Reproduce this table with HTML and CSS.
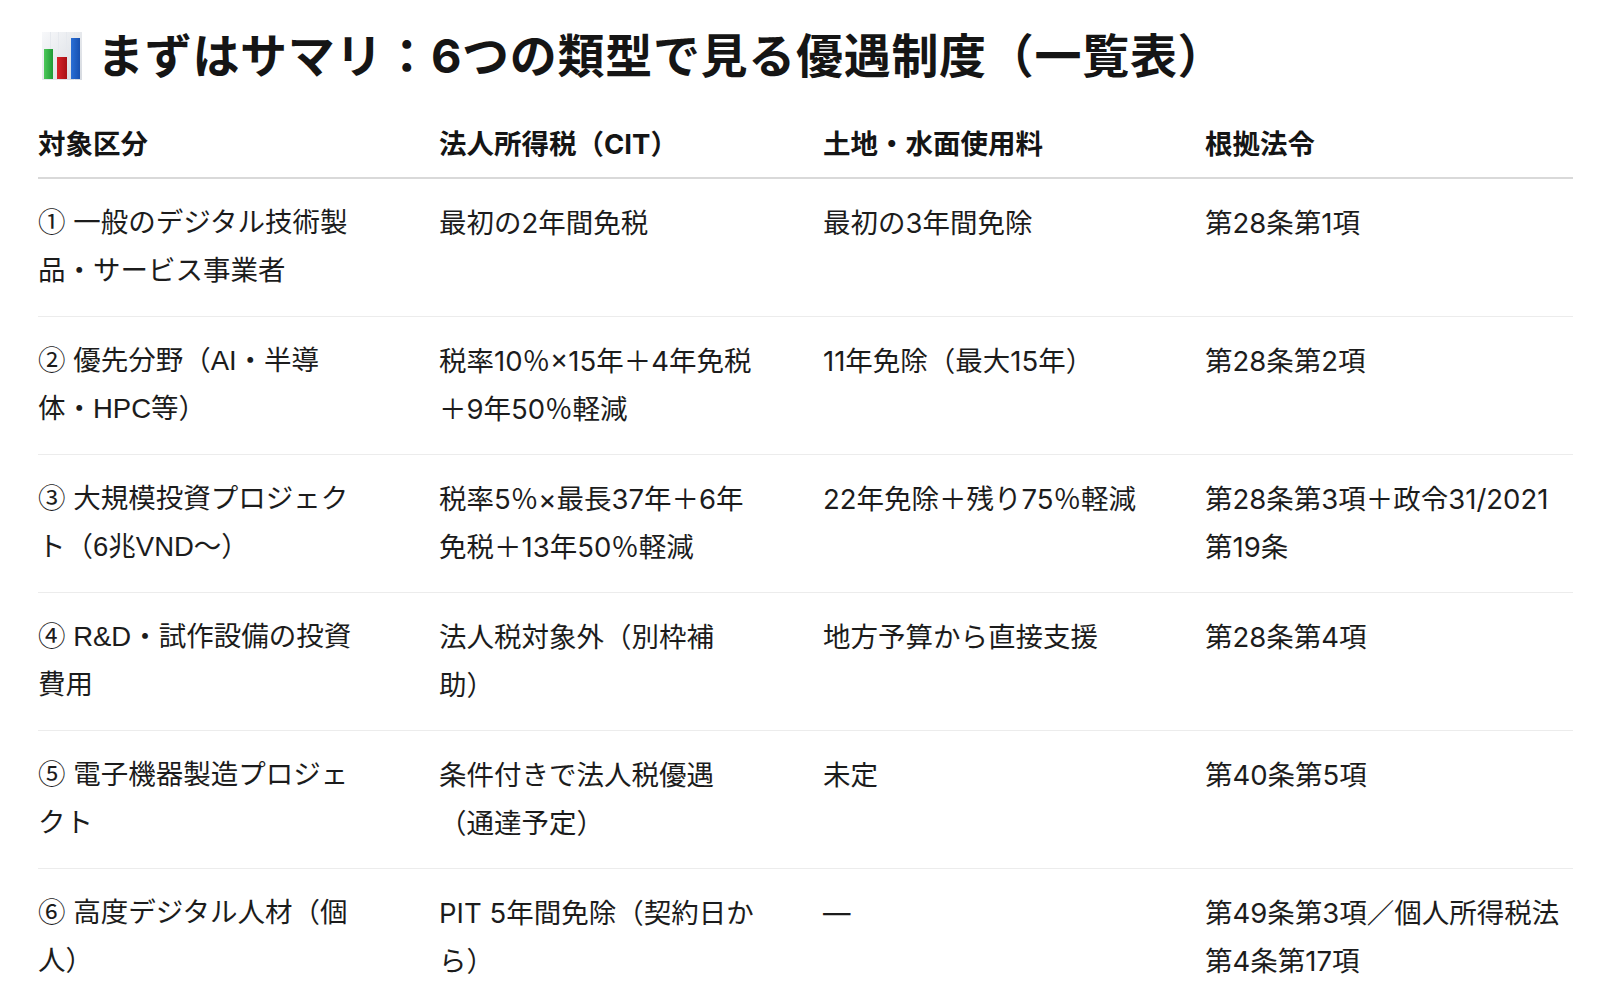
FILE: index.html
```html
<!DOCTYPE html>
<html lang="ja">
<head>
<meta charset="utf-8">
<title>まずはサマリ</title>
<link rel="stylesheet" href="styles.css">
</head>
<body>
<main class="page">
  <h2 class="title">
    <svg class="title-icon" width="40" height="48" viewBox="0 0 40 48" aria-hidden="true">
      <defs>
        <linearGradient id="card" x1="0" y1="0" x2="1" y2="1">
          <stop offset="0" stop-color="#f7f8fa"/>
          <stop offset="1" stop-color="#d6dae0"/>
        </linearGradient>
        <linearGradient id="g" x1="0" y1="0" x2="1" y2="0">
          <stop offset="0" stop-color="#4cc85a"/>
          <stop offset="1" stop-color="#1f9a35"/>
        </linearGradient>
        <linearGradient id="r" x1="0" y1="0" x2="1" y2="0">
          <stop offset="0" stop-color="#d9232a"/>
          <stop offset="1" stop-color="#a80f14"/>
        </linearGradient>
        <linearGradient id="b" x1="0" y1="0" x2="1" y2="0">
          <stop offset="0" stop-color="#2a6fd6"/>
          <stop offset="1" stop-color="#1750b0"/>
        </linearGradient>
      </defs>
      <rect x="0" y="0" width="40" height="48" fill="url(#card)"/>
      <g stroke="#e6e9ee" stroke-width="1">
        <line x1="8.5" y1="0" x2="8.5" y2="48"/>
        <line x1="16.5" y1="0" x2="16.5" y2="48"/>
        <line x1="24.5" y1="0" x2="24.5" y2="48"/>
        <line x1="32.5" y1="0" x2="32.5" y2="48"/>
      </g>
      <rect x="2" y="17" width="9" height="30" fill="url(#g)"/>
      <rect x="15" y="25" width="10" height="22" fill="url(#r)"/>
      <rect x="29" y="6" width="9" height="41" fill="url(#b)"/>
    </svg>
    <span>まずはサマリ：6つの類型で見る優遇制度（一覧表）</span>
  </h2>

  <table class="summary">
    <colgroup>
      <col class="w1"><col class="w2"><col class="w3"><col class="w4">
    </colgroup>
    <thead>
      <tr>
        <th>対象区分</th>
        <th>法人所得税（CIT）</th>
        <th>土地・水面使用料</th>
        <th>根拠法令</th>
      </tr>
    </thead>
    <tbody>
      <tr>
        <td>① 一般のデジタル技術製品・サービス事業者</td>
        <td>最初の2年間免税</td>
        <td>最初の3年間免除</td>
        <td>第28条第1項</td>
      </tr>
      <tr>
        <td>② 優先分野（AI・半導体・HPC等）</td>
        <td>税率10％×15年＋4年免税＋9年50％軽減</td>
        <td>11年免除（最大15年）</td>
        <td>第28条第2項</td>
      </tr>
      <tr>
        <td>③ 大規模投資プロジェクト（6兆VND〜）</td>
        <td>税率5％×最長37年＋6年免税＋13年50％軽減</td>
        <td>22年免除＋残り75％軽減</td>
        <td>第28条第3項＋政令31/2021第19条</td>
      </tr>
      <tr>
        <td>④ R&amp;D・試作設備の投資費用</td>
        <td>法人税対象外（別枠補助）</td>
        <td>地方予算から直接支援</td>
        <td>第28条第4項</td>
      </tr>
      <tr>
        <td>⑤ 電子機器製造プロジェクト</td>
        <td>条件付きで法人税優遇（通達予定）</td>
        <td>未定</td>
        <td>第40条第5項</td>
      </tr>
      <tr>
        <td>⑥ 高度デジタル人材（個人）</td>
        <td>PIT 5年間免除（契約日から）</td>
        <td>—</td>
        <td>第49条第3項／個人所得税法第4条第17項</td>
      </tr>
    </tbody>
  </table>
</main>
</body>
</html>
```

FILE: styles.css
```css
html, body {
  margin: 0;
  padding: 0;
  background: #ffffff;
}

body {
  font-family: Inter, "Noto Sans CJK JP", "Noto Sans", sans-serif;
  color: #1c1c1c;
}

.page {
  padding: 21px 45px 0 38px;
}

.title {
  display: flex;
  align-items: center;
  gap: 15px;
  margin: 0 0 29px 0;
  padding-left: 4px;
  height: 70px;
  font-size: 47px;
  font-weight: 700;
  line-height: 70px;
  color: #151515;
  letter-spacing: 0.7px;
}

.title-icon {
  flex: none;
  display: block;
}

.summary {
  width: 1535px;
  table-layout: fixed;
  border-collapse: collapse;
  font-size: 27.5px;
  line-height: 48px;
  text-spacing-trim: space-all;
}

.w1 { width: 401px; }
.w2 { width: 384px; }
.w3 { width: 382px; }
.w4 { width: 368px; }

.summary th {
  text-align: left;
  font-weight: 700;
  color: #151515;
  padding: 0 0 9px 0;
  border-bottom: 2px solid #d9d9d9;
  vertical-align: bottom;
}

.summary td {
  padding: 20px 0 21px 0;
  vertical-align: top;
  border-bottom: 1px solid #ececec;
  line-break: strict;
}

/* first column: a Latin face without circled digits, so ①–⑥ come from the CJK font */
.summary td:nth-child(1) {
  font-family: "Liberation Sans", "Noto Sans CJK JP", sans-serif;
}

.summary th:nth-child(1), .summary td:nth-child(1) { padding-right: 76px; }
.summary th:nth-child(2), .summary td:nth-child(2) { padding-right: 64px; }
.summary th:nth-child(3), .summary td:nth-child(3) { padding-right: 20px; }
.summary th:nth-child(4), .summary td:nth-child(4) { padding-right: 0; }
```
